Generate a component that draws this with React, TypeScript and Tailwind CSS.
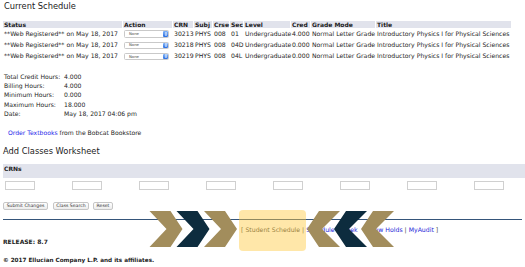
import React from "react";

const COLS =
  "grid grid-cols-[119px_49px_20px_18px_16px_13px_46px_19px_64px_135px] gap-x-px";

const headers = [
  "Status",
  "Action",
  "CRN",
  "Subj",
  "Crse",
  "Sec",
  "Level",
  "Cred",
  "Grade Mode",
  "Title",
];

const rows = [
  { crn: "30213", sec: "01", cred: "4.000" },
  { crn: "30218", sec: "04D", cred: "0.000" },
  { crn: "30219", sec: "04L", cred: "0.000" },
];

const totals: [string, string][] = [
  ["Total Credit Hours:", "4.000"],
  ["Billing Hours:", "4.000"],
  ["Minimum Hours:", "0.000"],
  ["Maximum Hours:", "18.000"],
  ["Date:", "May 18, 2017 04:06 pm"],
];

function SelectBox() {
  return (
    <div className="ml-px flex h-[7.5px] w-[45px] items-center justify-between rounded-[1.5px] border border-[#c9c9c9] bg-white">
      <span className="pl-[4px] text-[3.8px] leading-none text-[#444]">None</span>
      <span className="flex h-full w-[5px] items-center justify-center rounded-[1px] bg-linear-to-b from-[#7fb2f7] to-[#2c6fe0]">
        <svg width="4" height="6" viewBox="0 0 4 6">
          <path d="M0.6 2.5 L2 1 L3.4 2.5Z M0.6 3.5 L2 5 L3.4 3.5Z" fill="#fff" />
        </svg>
      </span>
    </div>
  );
}

function Btn({ label, w }: { label: string; w: string }) {
  return (
    <div
      className={`flex h-[8px] ${w} items-center justify-center rounded-[2px] border border-[#c6c6c6] bg-linear-to-b from-white to-[#ececec] text-[4.6px] leading-none text-[#333]`}
    >
      {label}
    </div>
  );
}

const RIGHT: [number, number][] = [
  [0, 0],
  [21, 0],
  [33, 18],
  [21, 36],
  [0, 36],
  [17, 18],
];
const LEFT: [number, number][] = [
  [33, 0],
  [12, 0],
  [0, 18],
  [12, 36],
  [33, 36],
  [15, 18],
];

function pts(shape: [number, number][], x0: number, y0: number) {
  return shape.map(([x, y]) => `${x + x0},${y + y0}`).join(" ");
}

export default function App() {
  const gold = "#a28d5c";
  const navy = "#0d2c3e";
  const Y0 = 211;
  return (
    <div className="relative h-[267px] w-[525px] overflow-hidden bg-white font-['DejaVu_Sans',sans-serif] text-[#1c1c1c]">
      <div className="pl-[3px]">
        <h1 className="mt-px pl-px text-[8.3px] font-normal leading-[10px] text-[#222]">
          Current Schedule
        </h1>

        <div className="mt-[9.7px]">
          <div className={`${COLS} h-[7.3px] text-[6px] font-bold leading-[7.3px]`}>
            {headers.map((h) => (
              <div key={h} className="whitespace-nowrap bg-[#e1e3ec] pl-px">
                {h}
              </div>
            ))}
          </div>
          {rows.map((r) => (
            <div
              key={r.crn}
              className={`${COLS} mt-px h-[10.2px] items-center whitespace-nowrap text-[6.15px] leading-[10px]`}
            >
              <div className="pl-px">**Web Registered** on May 18, 2017</div>
              <div>
                <SelectBox />
              </div>
              <div className="pl-px">{r.crn}</div>
              <div className="pl-px">PHYS</div>
              <div className="pl-px">008</div>
              <div className="pl-px">{r.sec}</div>
              <div className="pl-px">Undergraduate</div>
              <div className="pl-px">{r.cred}</div>
              <div className="pl-px">Normal Letter Grade</div>
              <div className="pl-px">Introductory Physics I for Physical Sciences</div>
            </div>
          ))}
        </div>

        <div className="mt-[10.5px] grid grid-cols-[60px_auto] whitespace-nowrap pl-px text-[6.1px] leading-[9.15px]">
          {totals.map(([k, v]) => (
            <React.Fragment key={k}>
              <span>{k}</span>
              <span>{v}</span>
            </React.Fragment>
          ))}
        </div>

        <div className="mt-[9.85px] whitespace-nowrap pl-[5px] text-[6.1px] leading-[9.15px]">
          <a className="text-[#2b2bea]">Order Textbooks</a> from the Bobcat Bookstore
        </div>

        <h2 className="mt-[8.85px] text-[8.3px] font-normal leading-[10px] text-[#222]">
          Add Classes Worksheet
        </h2>

        <div className="mt-[8.3px] h-[14px] bg-[#e1e3ec] pl-px text-[6px] font-bold leading-[10px]">
          CRNs
        </div>

        <div className="mt-[3px] flex">
          {Array.from({ length: 8 }).map((_, i) => (
            <div key={i} className="w-[67px] shrink-0 pl-[2px]">
              <input
                aria-label={`CRN ${i + 1}`}
                className="block h-[9.5px] w-[30px] border border-[#d0d0d0] bg-white"
              />
            </div>
          ))}
        </div>

        <div className="mt-[11.5px] flex">
          <Btn label="Submit Changes" w="w-[45px]" />
          <div className="ml-[5px]">
            <Btn label="Class Search" w="w-[36px]" />
          </div>
          <div className="ml-[4px]">
            <Btn label="Reset" w="w-[20px]" />
          </div>
        </div>

        <div className="mt-[9px] h-[1.5px] w-[519px] bg-[#35557a]" />

        <div className="ml-[238px] mt-[5px] flex whitespace-pre text-[6.2px] leading-[9px] text-[#444]">
          <span>[ Student Schedule | </span>
          <a className="text-[#2424d8]">Schedule</a>
          <span> | </span>
          <a className="text-[#2424d8]">Week</a>
          <span className="ml-[7px]">| </span>
          <a className="text-[#2424d8]">View Holds</a>
          <span> | </span>
          <a className="text-[#2424d8]">MyAudit</a>
          <span> ]</span>
        </div>

        <div className="mt-[3.8px] text-[6px] font-bold leading-[8px]">RELEASE: 8.7</div>
        <div className="mt-[9.7px] whitespace-nowrap text-[5.7px] font-bold leading-[8px]">
          © 2017 Ellucian Company L.P. and its affiliates.
        </div>
      </div>

      <div className="absolute left-[239px] top-[210px] h-[41px] w-[67px] rounded-[4px] bg-[#ffc940]/45" />
      <svg className="absolute left-0 top-0" width="525" height="267" viewBox="0 0 525 267">
        <polygon points={pts(RIGHT, 149.5, Y0)} fill={gold} />
        <polygon points={pts(RIGHT, 176.5, Y0)} fill={navy} />
        <polygon points={pts(RIGHT, 204, Y0)} fill={gold} />
        <polygon points={pts(LEFT, 307, Y0)} fill={gold} />
        <polygon points={pts(LEFT, 334, Y0)} fill={navy} />
        <polygon points={pts(LEFT, 361, Y0)} fill={gold} />
      </svg>
    </div>
  );
}
